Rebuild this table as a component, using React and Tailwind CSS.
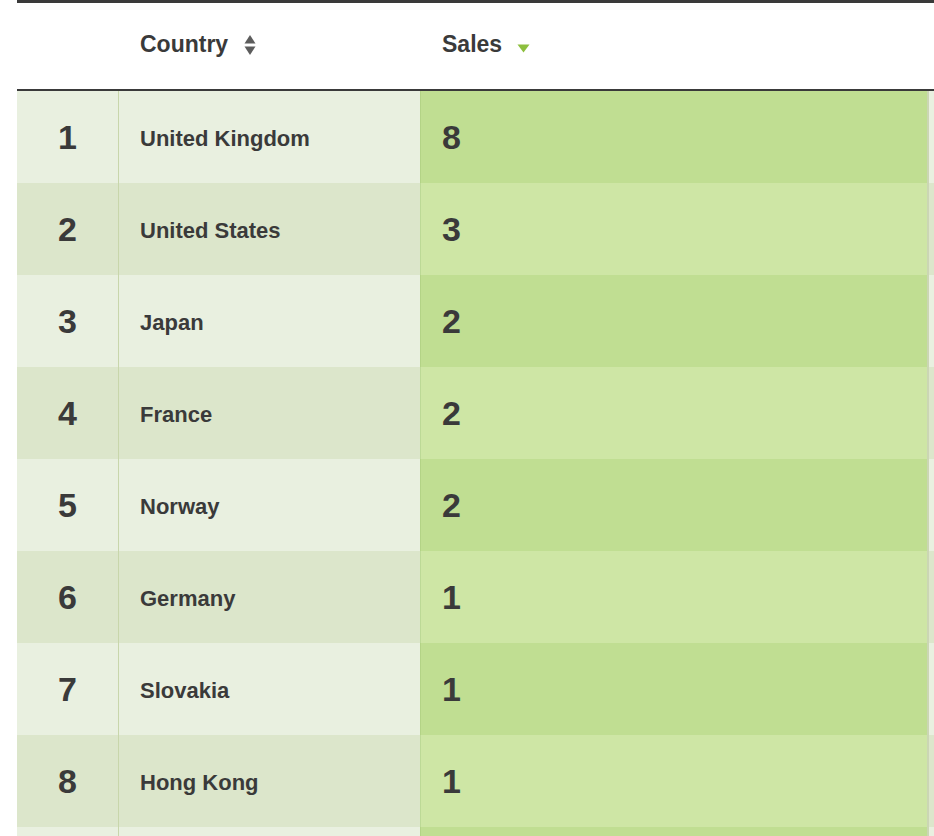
const rows = [
  { rank: 1, country: 'United Kingdom', sales: 8 },
  { rank: 2, country: 'United States', sales: 3 },
  { rank: 3, country: 'Japan', sales: 2 },
  { rank: 4, country: 'France', sales: 2 },
  { rank: 5, country: 'Norway', sales: 2 },
  { rank: 6, country: 'Germany', sales: 1 },
  { rank: 7, country: 'Slovakia', sales: 1 },
  { rank: 8, country: 'Hong Kong', sales: 1 },
];

const SortBoth = () => (
  <svg width="12" height="22" viewBox="0 0 12 22" className="ml-[16px] mt-[1px]">
    <path d="M6 1 L11.5 9.5 L0.5 9.5 Z" fill="#5c5c5c" />
    <path d="M6 21 L11.5 12.5 L0.5 12.5 Z" fill="#5c5c5c" />
  </svg>
);

const SortDown = () => (
  <svg width="13" height="9" viewBox="0 0 13 9" className="ml-[15px] mt-[8px]">
    <path d="M0.5 0.5 L12.5 0.5 L6.5 8.5 Z" fill="#8dbf3e" />
  </svg>
);

export default function App() {
  return (
    <div
      className="w-[934px] h-[836px] overflow-hidden bg-white text-[#3a3a3a]"
      style={{ fontFamily: '"Liberation Sans", Arial, sans-serif' }}
    >
      <div className="ml-[17px] w-[1000px] border-t-[3px] border-[#3a3a3a]">
        {/* header */}
        <div className="flex h-[88px] border-b-2 border-[#3a3a3a] font-bold text-[23px]">
          <div className="w-[102px]" />
          <div className="w-[301px] flex items-center pl-[21px] pb-[4px]">
            <span>Country</span>
            <SortBoth />
          </div>
          <div className="flex-1 flex items-center pl-[22px] pb-[4px]">
            <span>Sales</span>
            <SortDown />
          </div>
        </div>

        {/* body */}
        {rows.map((r, i) => {
          const odd = i % 2 === 0;
          return (
            <div key={r.rank} className="flex h-[92px] font-bold">
              <div
                className={`w-[102px] flex items-center justify-center text-[34px] border-r border-[#c8d6ab] ${
                  odd ? 'bg-[#e9f0e0]' : 'bg-[#dce6cb]'
                }`}
              >
                {r.rank}
              </div>
              <div
                className={`w-[301px] flex items-center pl-[21px] text-[22px] pt-[2px] ${
                  odd ? 'bg-[#e9f0e0]' : 'bg-[#dce6cb]'
                }`}
              >
                {r.country}
              </div>
              <div
                className={`w-[509px] flex items-center pl-[21px] text-[34px] border-l border-r-2 ${
                  odd
                    ? 'bg-[#c0de92] border-l-[#b3d386] border-r-[#cbd6b4]'
                    : 'bg-[#cee6a5] border-l-[#bcd996] border-r-[#cbd6b4]'
                }`}
              >
                {r.sales}
              </div>
              <div className={`flex-1 ${odd ? 'bg-[#e9f0e0]' : 'bg-[#dce6cb]'}`} />
            </div>
          );
        })}

        {/* next row, only its top edge is in view */}
        <div className="flex h-[92px]">
          <div className="w-[102px] bg-[#e9f0e0] border-r border-[#c8d6ab]" />
          <div className="w-[301px] bg-[#e9f0e0]" />
          <div className="w-[509px] bg-[#c0de92] border-l border-r-2 border-l-[#b3d386] border-r-[#cbd6b4]" />
          <div className="flex-1 bg-[#e9f0e0]" />
        </div>
      </div>
    </div>
  );
}
